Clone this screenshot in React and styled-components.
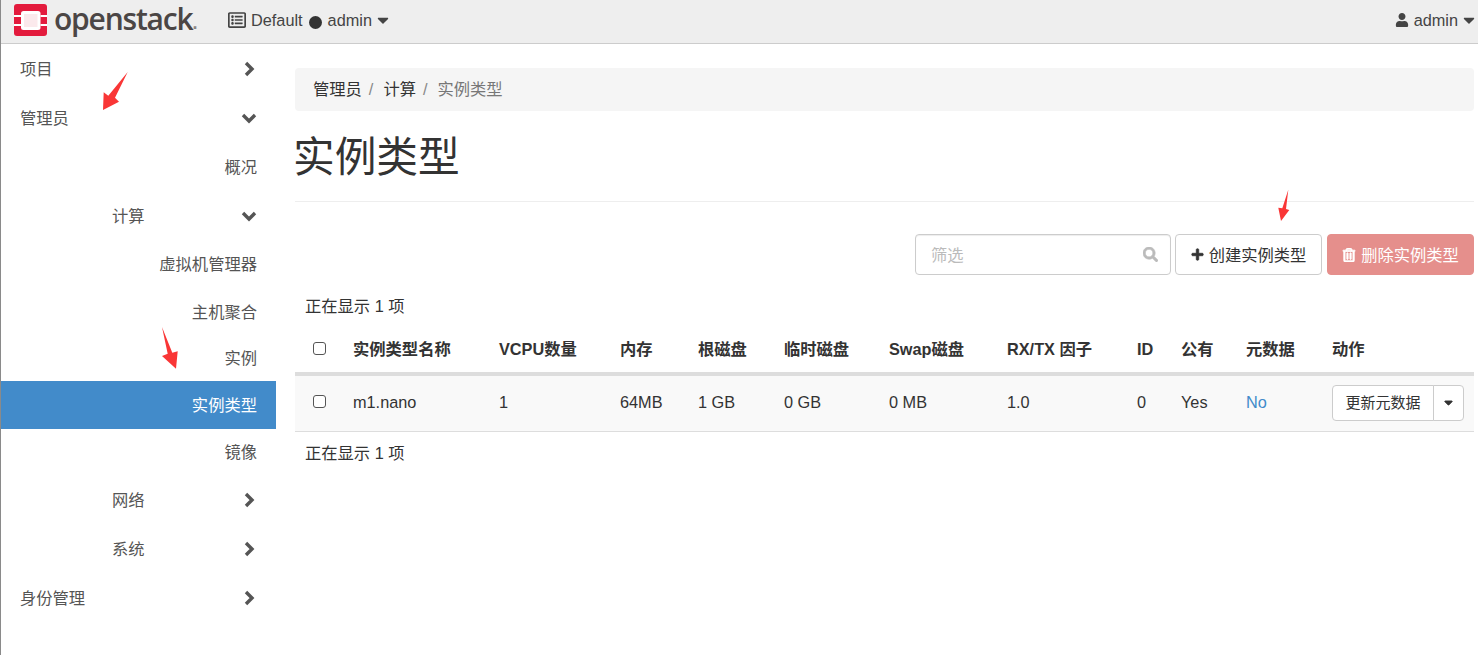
import React from 'react'
import styled, { createGlobalStyle } from 'styled-components'
import {
  FaSearch, FaPlus, FaRegTrashAlt, FaUser, FaCaretDown, FaRegListAlt,
} from 'react-icons/fa'

const FONT = `"Liberation Sans", "Noto Sans CJK SC", sans-serif`

const GlobalStyle = createGlobalStyle`
  html, body {
    margin: 0;
    padding: 0;
    background: #fff;
  }
  body {
    font-family: ${FONT};
    font-size: 16.3px;
    line-height: 22px;
    color: #333;
    overflow: hidden;
  }
`

const Page = styled.div`
  position: relative;
  height: 655px;
  border-left: 1px solid #8a8a8a;
  box-sizing: border-box;
`

const Navbar = styled.header`
  display: flex;
  align-items: center;
  height: 43px;
  box-sizing: content-box;
  background: #eee;
  border-bottom: 1px solid #ccc;
`

const Brand = styled.div`
  display: flex;
  align-items: center;
  width: 227px;
  padding-left: 13px;
  padding-bottom: 3px;
  box-sizing: border-box;
  gap: 7px;
`

const BrandName = styled.span`
  font-family: "Open Sans", sans-serif;
  font-size: 30px;
  font-weight: 600;
  line-height: 36px;
  letter-spacing: -1.2px;
  color: #4b4645;
  margin-top: -2px;
`

const BrandDot = styled.span`
  font-size: 18px;
  font-weight: 700;
  margin: 6px 0 0 -7px;
  color: #8b8584;
`

const NavMenu = styled.div`
  display: flex;
  align-items: center;
  gap: 5px;
  padding-bottom: 3px;
  color: #444;
  svg { flex: none; }
`

const Dot = styled.span`
  display: inline-block;
  width: 13px;
  height: 13px;
  margin: 0 6px 0 6px;
  border-radius: 50%;
  background: #333;
  vertical-align: -3px;
`

const UserMenu = styled(NavMenu)`
  margin-left: auto;
  margin-right: 0;
`

const NavCaret = styled(FaCaretDown)`
  margin-left: -3px;
`

const Body = styled.div`
  display: flex;
`

const Sidebar = styled.nav`
  width: 275px;
  flex: none;
  display: flex;
  flex-direction: column;
`

const NavRow = styled.div`
  display: flex;
  align-items: center;
  justify-content: ${(p) => (p.$leaf ? 'flex-end' : 'space-between')};
  height: ${(p) => p.$h || 49}px;
  padding-left: ${(p) => (p.$sub ? 111 : 19)}px;
  padding-right: 19px;
  box-sizing: border-box;
  color: ${(p) => (p.$active ? '#fff' : '#555')};
  background: ${(p) => (p.$active ? '#428bca' : 'transparent')};
`

const Main = styled.main`
  flex: 1;
  margin-left: 19px;
  margin-right: 4px;
  padding-top: 24px;
  min-width: 0;
`

const Breadcrumb = styled.div`
  display: flex;
  align-items: center;
  height: 43px;
  padding-left: 18px;
  padding-bottom: 2px;
  box-sizing: border-box;
  background: #f5f5f5;
  border-radius: 4px;
`

const Crumb = styled.span`
  color: ${(p) => (p.$current ? '#777' : '#333')};
`

const CrumbSep = styled.span`
  color: #888;
  margin: 0 10px 0 7px;
`

const Title = styled.h1`
  margin: 0;
  padding: 20px 0 17px;
  font-size: 41.7px;
  line-height: 53px;
  font-weight: 400;
  text-indent: -2px;
  color: #333;
  border-bottom: 1px solid #eee;
`

const Toolbar = styled.div`
  display: flex;
  justify-content: flex-end;
  gap: 4px;
  margin-top: 32px;
`

const FilterBox = styled.div`
  display: flex;
  align-items: center;
  justify-content: space-between;
  width: 256px;
  height: 41px;
  box-sizing: border-box;
  padding: 0 12px 0 15px;
  border: 1px solid #ccc;
  border-radius: 4px;
  color: #bbb;
  box-shadow: inset 0 1px 1px rgba(0, 0, 0, 0.075);
  svg { stroke: currentColor; stroke-width: 20; }
`

const Button = styled.button`
  display: inline-flex;
  align-items: center;
  justify-content: center;
  gap: 5px;
  height: ${(p) => p.$h || 41}px;
  width: ${(p) => p.$w}px;
  margin-left: ${(p) => (p.$danger ? 1 : 0)}px;
  padding: 0;
  font-family: inherit;
  font-size: ${(p) => p.$size || 16.3}px;
  line-height: 22px;
  color: ${(p) => (p.$danger ? '#fff' : '#333')};
  background: ${(p) => (p.$danger ? '#e58f8c' : '#fff')};
  border: 1px solid ${(p) => (p.$danger ? '#e58f8c' : '#ccc')};
  border-radius: 4px;
  svg { stroke: currentColor; stroke-width: 30; }
`

const Count = styled.div`
  padding-left: 10px;
  line-height: 22px;
  margin-top: ${(p) => p.$top}px;
`

const Table = styled.table`
  width: 100%;
  margin-top: 13px;
  border-collapse: collapse;
  table-layout: fixed;
`

const Th = styled.th`
  width: ${(p) => p.$w}px;
  height: 44px;
  padding: 0 0 5px 10px;
  text-align: left;
  font-weight: 700;
  color: #333;
  border-bottom: 4px solid #ddd;
  box-sizing: border-box;
`

const Td = styled.td`
  height: 57px;
  padding: 0 0 3px 10px;
  background: #f9f9f9;
  border-bottom: 1px solid #ddd;
  box-sizing: border-box;
  color: ${(p) => (p.$link ? '#428bca' : '#333')};
`

const ActionTd = styled(Td)`
  padding-bottom: 1px;
`

const CheckCell = styled.span`
  display: block;
  width: 13px;
  height: 13px;
  margin-left: 8px;
  box-sizing: border-box;
  border: 1.5px solid #555;
  border-radius: 3px;
  background: #fff;
`

const SplitButton = styled.div`
  display: flex;
  width: 132px;
  button:first-child {
    border-radius: 4px 0 0 4px;
  }
  button:last-child {
    border-left: 1px solid #ccc;
    border-radius: 0 4px 4px 0;
    margin-left: -1px;
  }
`

const Mark = styled.svg`
  position: absolute;
  left: ${(p) => p.$x}px;
  top: ${(p) => p.$y}px;
  pointer-events: none;
`

const RedArrow = ({ x, y, w, h, points }) => (
  <Mark $x={x} $y={y} width={w} height={h} viewBox={`0 0 ${w} ${h}`}>
    <polygon points={points} fill="#f93636" />
  </Mark>
)

const Chevron = ({ down }) => (
  <svg width="16" height="16" viewBox="0 0 16 16">
    <polyline
      points={down ? '2,5 8,11 14,5' : '5,2 11,8 5,14'}
      fill="none"
      stroke="#555"
      strokeWidth="3.4"
    />
  </svg>
)

const Logo = () => (
  <svg width="33" height="32" viewBox="0 0 33 32">
    <rect width="33" height="32" rx="3" fill="#e31b3d" />
    <rect x="7" y="7" width="19.5" height="19" rx="2.5" fill="#fff" />
    <rect x="10" y="10" width="13.5" height="13" fill="#fbe9ec" />
    <rect y="11" width="7" height="2" fill="#fff" />
    <rect y="20" width="7" height="2" fill="#fff" />
    <rect x="26.5" y="11" width="6.5" height="2" fill="#fff" />
    <rect x="26.5" y="20" width="6.5" height="2" fill="#fff" />
  </svg>
)

const columns = [
  { label: '实例类型名称', w: 146 },
  { label: 'VCPU数量', w: 121 },
  { label: '内存', w: 78 },
  { label: '根磁盘', w: 86 },
  { label: '临时磁盘', w: 105 },
  { label: 'Swap磁盘', w: 118 },
  { label: 'RX/TX 因子', w: 130 },
  { label: 'ID', w: 44 },
  { label: '公有', w: 65 },
  { label: '元数据', w: 86 },
  { label: '动作' },
]

const cells = ['m1.nano', '1', '64MB', '1 GB', '0 GB', '0 MB', '1.0', '0', 'Yes']

export default function App() {
  return (
    <Page>
      <GlobalStyle />
      <Navbar>
        <Brand>
          <Logo />
          <BrandName>openstack</BrandName>
          <BrandDot>.</BrandDot>
        </Brand>
        <NavMenu>
          <FaRegListAlt size={18} />
          <span>Default<Dot />admin</span>
          <NavCaret size={18} />
        </NavMenu>
        <UserMenu>
          <FaUser size={14} />
          <span>admin</span>
          <NavCaret size={18} />
        </UserMenu>
      </Navbar>

      <Body>
        <Sidebar>
          <NavRow>项目<Chevron /></NavRow>
          <NavRow>管理员<Chevron down /></NavRow>
          <NavRow $leaf>概况</NavRow>
          <NavRow $sub>计算<Chevron down /></NavRow>
          <NavRow $leaf $h={48}>虚拟机管理器</NavRow>
          <NavRow $leaf $h={47}>主机聚合</NavRow>
          <NavRow $leaf $h={46}>实例</NavRow>
          <NavRow $leaf $active $h={48}>实例类型</NavRow>
          <NavRow $leaf $h={46}>镜像</NavRow>
          <NavRow $sub>网络<Chevron /></NavRow>
          <NavRow $sub>系统<Chevron /></NavRow>
          <NavRow>身份管理<Chevron /></NavRow>
        </Sidebar>

        <Main>
          <Breadcrumb>
            <Crumb>管理员</Crumb>
            <CrumbSep>/</CrumbSep>
            <Crumb>计算</Crumb>
            <CrumbSep>/</CrumbSep>
            <Crumb $current>实例类型</Crumb>
          </Breadcrumb>

          <Title>实例类型</Title>

          <Toolbar>
            <FilterBox>
              筛选
              <FaSearch size={15} />
            </FilterBox>
            <Button $w={147}><FaPlus size={13} />创建实例类型</Button>
            <Button $danger $w={147}><FaRegTrashAlt size={14} />删除实例类型</Button>
          </Toolbar>

          <Count $top={20}>正在显示 1 项</Count>

          <Table>
            <thead>
              <tr>
                <Th $w={48}><CheckCell /></Th>
                {columns.map((c) => (
                  <Th key={c.label} $w={c.w}>{c.label}</Th>
                ))}
              </tr>
            </thead>
            <tbody>
              <tr>
                <Td><CheckCell /></Td>
                {cells.map((c, i) => (
                  <Td key={i}>{c}</Td>
                ))}
                <Td $link>No</Td>
                <ActionTd>
                  <SplitButton>
                    <Button $w={102} $h={36} $size={15}>更新元数据</Button>
                    <Button $w={31} $h={36}><FaCaretDown size={13} /></Button>
                  </SplitButton>
                </ActionTd>
              </tr>
            </tbody>
          </Table>

          <Count $top={10}>正在显示 1 项</Count>
        </Main>
      </Body>

      <RedArrow x={100} y={71} w={28} h={40} points="26.7,1 14,26.7 18,30.7 2,39 2.7,21.3 7.3,24.7" />
      <RedArrow x={159} y={325} w={20} h={45} points="2,2 12.3,27.7 17.7,26.3 16,43.7 2,31 7.7,28.7" />
      <RedArrow x={1276} y={188} w={15} h={36} points="11.3,1.7 9,21 12.3,22 4,33 1.3,19.7 5.3,20.3" />
    </Page>
  )
}
